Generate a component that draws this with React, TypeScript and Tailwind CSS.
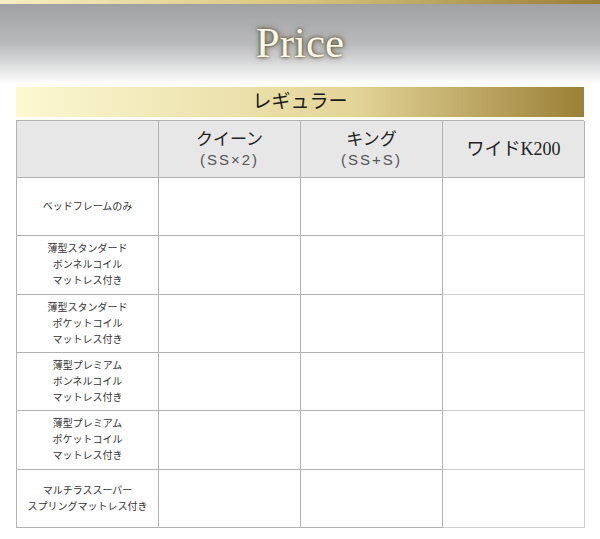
const rows: string[][] = [
  ["ベッドフレームのみ"],
  ["薄型スタンダード", "ボンネルコイル", "マットレス付き"],
  ["薄型スタンダード", "ポケットコイル", "マットレス付き"],
  ["薄型プレミアム", "ボンネルコイル", "マットレス付き"],
  ["薄型プレミアム", "ポケットコイル", "マットレス付き"],
  ["マルチラススーパー", "スプリングマットレス付き"],
];

const serif = "font-['Liberation_Serif','Noto_Sans_CJK_JP',serif]";
const sans = "font-['Liberation_Sans','Noto_Sans_CJK_JP',sans-serif]";

export default function App() {
  return (
    <div className="w-[600px] h-[539px] bg-white overflow-hidden">
      {/* top strip */}
      <div className="h-[4px] bg-gradient-to-r from-[#f6efc2] via-[#d8c47e] to-[#9a7f36]" />
      <div className="h-[80px] bg-gradient-to-b from-[#a0a1a3] via-[#b9babc] via-50% to-white flex justify-center pt-[14px]">
        <h1
          className={`${serif} text-[43px] leading-[50px] text-[#fbf8ea] [text-shadow:0_0_6px_#5f5433,0_0_3px_#4a4128]`}
        >
          Price
        </h1>
      </div>

      <div className="px-[16px] mt-[3px]">
        <div className="h-[30px] w-[568px] bg-gradient-to-r from-[#fcf8d2] via-[#e3d497] via-60% to-[#9b8035] flex items-center justify-center">
          <span className={`${serif} text-[19px] text-[#1a1a1a]`}>レギュラー</span>
        </div>

        <div className="mt-[3px] w-[568px] grid grid-cols-[142px_142px_142px_142px] border-t border-l border-[#b2b2b2]">
          <div className="h-[57px] bg-[#e7e7e7] border-r border-b border-[#b2b2b2]" />
          <div className="h-[57px] bg-[#e7e7e7] border-r border-b border-[#b2b2b2] flex flex-col items-center justify-center">
            <div className={`${serif} text-[17px] leading-[22px] text-[#222]`}>クイーン</div>
            <div className={`${sans} text-[15px] leading-[18px] text-[#555] tracking-[2px]`}>(SS×2)</div>
          </div>
          <div className="h-[57px] bg-[#e7e7e7] border-r border-b border-[#b2b2b2] flex flex-col items-center justify-center">
            <div className={`${serif} text-[17px] leading-[22px] text-[#222]`}>キング</div>
            <div className={`${sans} text-[15px] leading-[18px] text-[#555] tracking-[2px]`}>(SS+S)</div>
          </div>
          <div className="h-[57px] bg-[#e7e7e7] border-r border-b border-[#b2b2b2] flex items-center justify-center">
            <div className={`${serif} text-[18px] text-[#222]`}>ワイドK200</div>
          </div>

          {rows.map((lines, i) => (
            <div key={i} className="contents">
              <div
                className={`${i === 1 || i === 4 ? "h-[59px]" : "h-[58px]"} border-r border-b border-[#b2b2b2] flex flex-col items-center justify-center`}
              >
                {lines.map((l) => (
                  <div key={l} className={`${sans} text-[10px] leading-[16px] text-[#333]`}>
                    {l}
                  </div>
                ))}
              </div>
              <div className="border-r border-b border-[#b2b2b2]" />
              <div className="border-r border-b border-[#b2b2b2]" />
              <div className="border-r border-b border-[#d0d0d0]" />
            </div>
          ))}
        </div>
      </div>
    </div>
  );
}
